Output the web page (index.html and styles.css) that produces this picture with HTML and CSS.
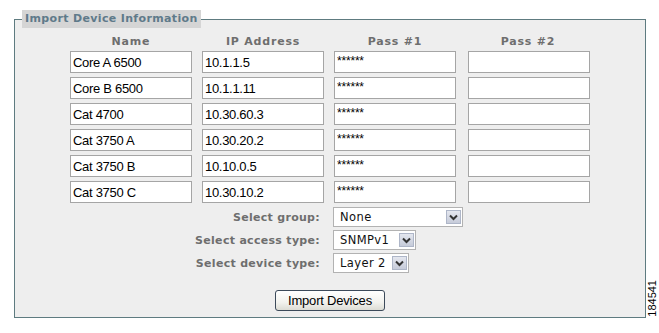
FILE: index.html
```
<!DOCTYPE html>
<html>
<head>
    <meta charset="UTF-8">
    <title>Import Device Information</title>
    <link rel="stylesheet" href="styles.css">
</head>
<body>
    <div class="page">
        <fieldset class="panel">
            <legend>Import Device Information</legend>
            <div class="devices">
                <div class="head">Name</div>
                <div class="head">IP Address</div>
                <div class="head">Pass #1</div>
                <div class="head last">Pass #2</div>

                <input class="field" type="text" value="Core A 6500">
                <input class="field" type="text" value="10.1.1.5">
                <input class="field pass" type="text" value="******">
                <input class="field last" type="text" value="">

                <input class="field" type="text" value="Core B 6500">
                <input class="field" type="text" value="10.1.1.11">
                <input class="field pass" type="text" value="******">
                <input class="field last" type="text" value="">

                <input class="field" type="text" value="Cat 4700">
                <input class="field" type="text" value="10.30.60.3">
                <input class="field pass" type="text" value="******">
                <input class="field last" type="text" value="">

                <input class="field" type="text" value="Cat 3750 A">
                <input class="field" type="text" value="10.30.20.2">
                <input class="field pass" type="text" value="******">
                <input class="field last" type="text" value="">

                <input class="field" type="text" value="Cat 3750 B">
                <input class="field" type="text" value="10.10.0.5">
                <input class="field pass" type="text" value="******">
                <input class="field last" type="text" value="">

                <input class="field" type="text" value="Cat 3750 C">
                <input class="field" type="text" value="10.30.10.2">
                <input class="field pass" type="text" value="******">
                <input class="field last" type="text" value="">
            </div>

            <div class="options">
                <label>Select group:</label>
                <div class="dropbox group"><span>None</span><b class="arrow"><svg width="9" height="7" viewBox="0 0 9 7"><path d="M1 1.5 L4.5 5 L8 1.5" fill="none" stroke="#333" stroke-width="2"/></svg></b></div>

                <label>Select access type:</label>
                <div class="dropbox access"><span>SNMPv1</span><b class="arrow"><svg width="9" height="7" viewBox="0 0 9 7"><path d="M1 1.5 L4.5 5 L8 1.5" fill="none" stroke="#333" stroke-width="2"/></svg></b></div>

                <label>Select device type:</label>
                <div class="dropbox devtype"><span>Layer 2</span><b class="arrow"><svg width="9" height="7" viewBox="0 0 9 7"><path d="M1 1.5 L4.5 5 L8 1.5" fill="none" stroke="#333" stroke-width="2"/></svg></b></div>
            </div>

            <div class="actions">
                <button class="btn" type="button">Import Devices</button>
            </div>
        </fieldset>
        <div class="figno">184541</div>
    </div>
</body>
</html>
```

FILE: styles.css
```
body {
    margin: 0;
    padding: 0;
    background-color: #ffffff;
    font-family: "DejaVu Sans", Verdana, sans-serif;
}

.page {
    position: relative;
    width: 659px;
    height: 333px;
    padding-top: 10px;
    box-sizing: border-box;
}

.panel {
    margin: 0 0 0 14px;
    padding: 0;
    width: 632px;
    height: 308px;
    box-sizing: border-box;
    border: 1px solid #5e7b80;
    background-color: #eeeeee;
}

.panel legend {
    margin-left: 7px;
    padding: 1px 3px 2px 3px;
    background-color: #d5d5d5;
    color: #5f7a8a;
    font-weight: bold;
    font-size: 11px;
    letter-spacing: 0.35px;
    line-height: 15px;
}

.devices {
    display: grid;
    grid-template-columns: 122px 122px 122px 122px;
    column-gap: 10px;
    row-gap: 4px;
    padding-left: 55px;
    margin-top: 8px;
}

.head {
    text-align: center;
    color: #6e6e6e;
    font-weight: bold;
    font-size: 11px;
    letter-spacing: 0.8px;
    line-height: 12px;
    margin-bottom: -1px;
}

.field {
    width: 122px;
    height: 22px;
    box-sizing: border-box;
    margin: 0;
    border: 1px solid #a5a5a5;
    background-color: #ffffff;
    padding: 0 2px;
    font-family: "Liberation Sans", Arial, sans-serif;
    font-size: 13px;
    letter-spacing: -0.3px;
    color: #000000;
}

.last {
    margin-left: 2px;
}

.field.pass {
    font-size: 12px;
    letter-spacing: -0.2px;
    padding-bottom: 2px;
}

.options {
    display: grid;
    grid-template-columns: 305px auto;
    column-gap: 13px;
    row-gap: 3px;
    margin-top: 4px;
    justify-items: start;
    align-items: center;
}

.options label {
    justify-self: end;
    color: #6e6e6e;
    font-weight: bold;
    font-size: 11px;
    letter-spacing: 0.3px;
}

.dropbox {
    display: flex;
    align-items: center;
    justify-content: space-between;
    height: 20px;
    box-sizing: border-box;
    border: 1px solid #b2b2b2;
    background-color: #ffffff;
    padding: 0 1px 0 6px;
    font-size: 11.5px;
    color: #111111;
    letter-spacing: 0.4px;
}

.dropbox.group {
    width: 130px;
}

.dropbox.access {
    width: 83px;
}

.dropbox.devtype {
    width: 76px;
}

.arrow {
    display: flex;
    align-items: center;
    justify-content: center;
    width: 15px;
    height: 14px;
    box-sizing: border-box;
    border: 1px solid #aeb6c8;
    background: linear-gradient(#e4e7ef, #c6cbd9);
}

.actions {
    display: flex;
    justify-content: center;
    margin-top: 17px;
}

.btn {
    width: 110px;
    height: 21px;
    padding: 0;
    border: 1px solid #3c4a5a;
    border-radius: 3px;
    background: linear-gradient(#ffffff, #f2f2ee 60%, #dcdcd4);
    font-family: "Liberation Sans", Arial, sans-serif;
    font-size: 13px;
    letter-spacing: -0.2px;
    color: #000000;
}

.figno {
    position: absolute;
    right: 1px;
    top: 280px;
    writing-mode: vertical-rl;
    transform: rotate(180deg);
    font-family: "Liberation Sans", Arial, sans-serif;
    font-size: 11px;
    color: #000000;
}
```
